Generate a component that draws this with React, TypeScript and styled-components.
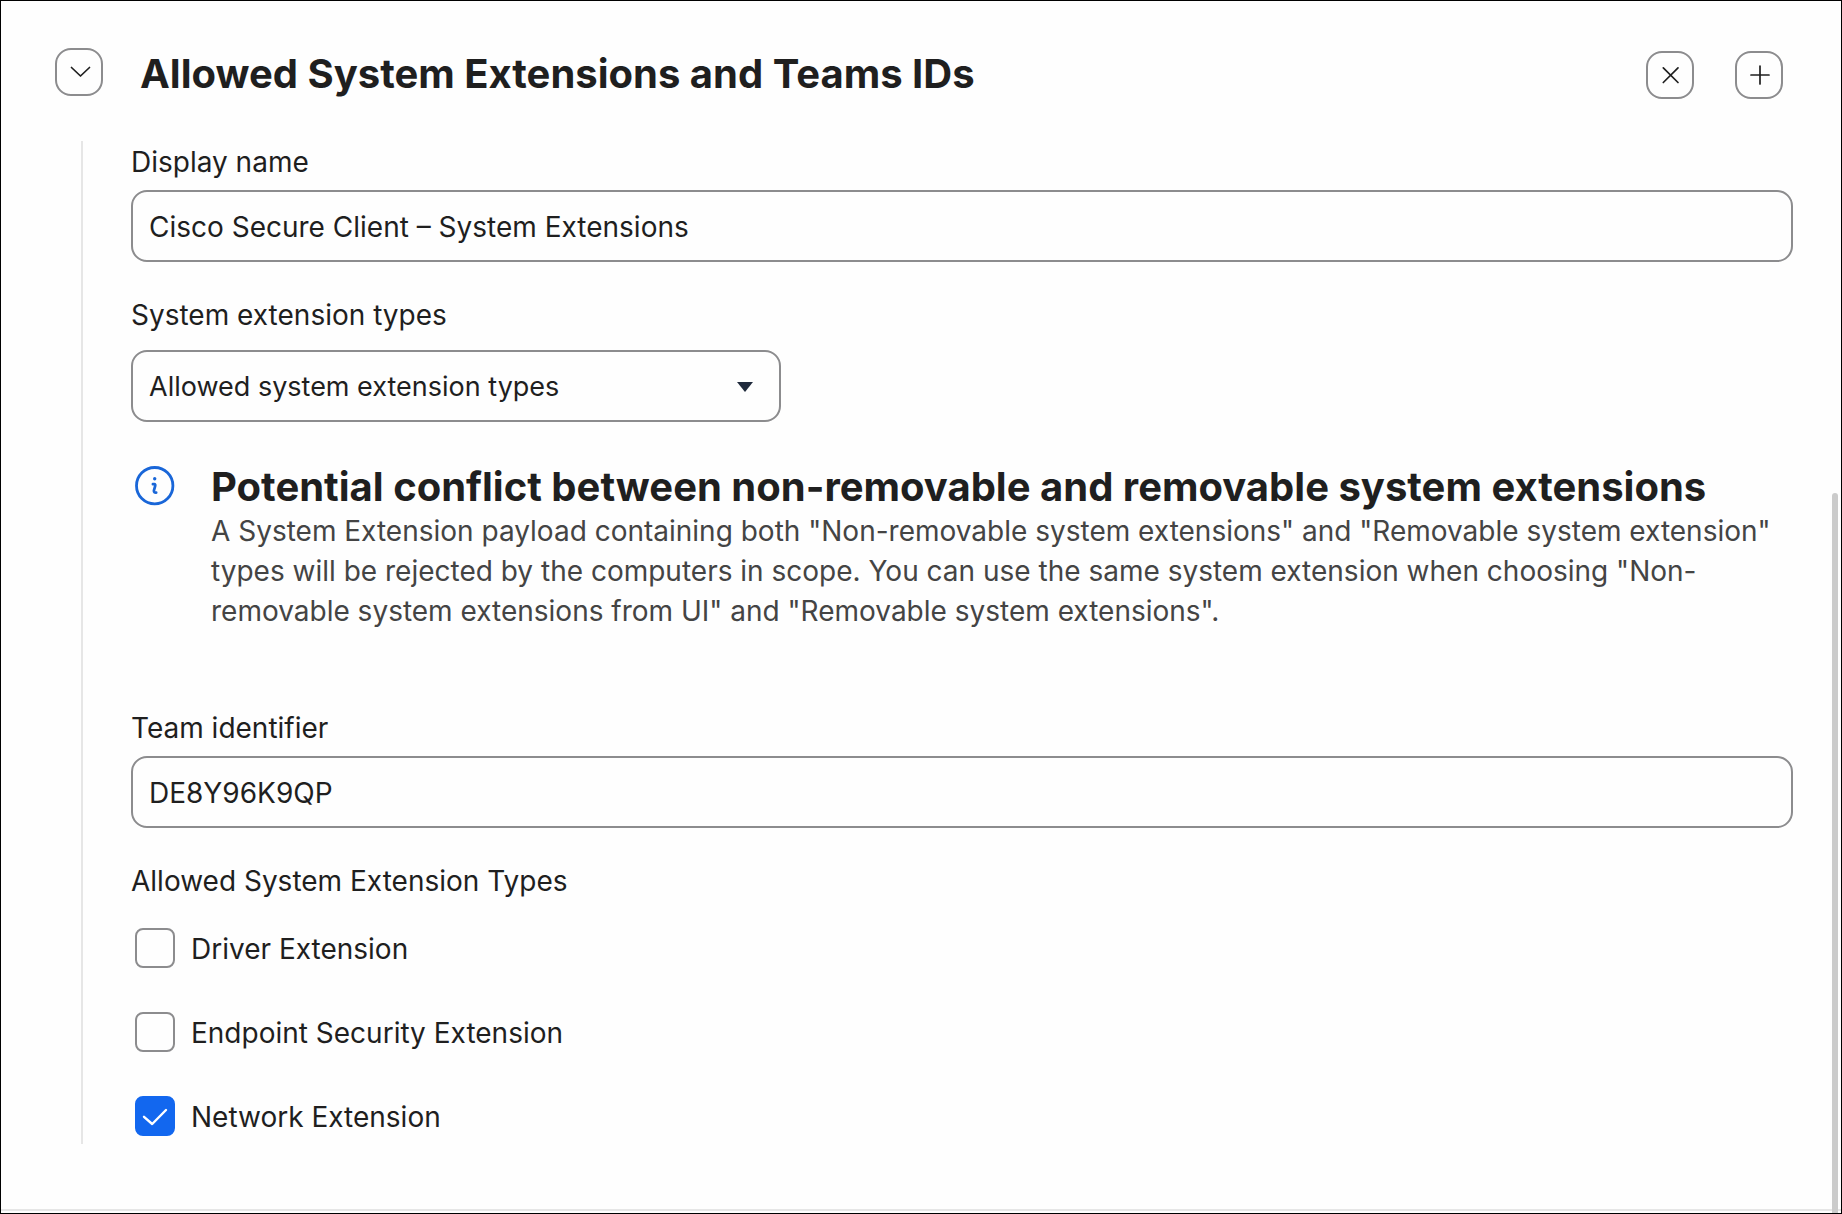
import React, { useState } from "react";
import styled, { createGlobalStyle } from "styled-components";

const ink = "#1f1f1f";
const outline = "#8c8c8e";
const hairline = "#e6e6e6";
const accent = "#1267ef";

const GlobalStyle = createGlobalStyle`
  *, *::before, *::after { box-sizing: border-box; }
  body {
    margin: 0;
    background: #fff;
    color: ${ink};
    font-family: Inter, "Liberation Sans", sans-serif;
    font-size: 28px;
    line-height: 40px;
  }
`;

const Page = styled.main`
  position: relative;
  display: flex;
  flex-direction: column;
  min-height: 100vh;
  padding-bottom: 2px;
  border: 1px solid #000;
  background: #fefefe;
`;

const Panel = styled.section`
  display: flex;
  flex-direction: column;
  gap: 42px;
  padding: 47px 48px 64px 54px;
`;

const Header = styled.header`
  display: flex;
  align-items: center;
  gap: 37px;
`;

const Title = styled.h1`
  flex: 1;
  margin: 0;
  font-size: 40px;
  line-height: 48px;
  font-weight: 700;
`;

const Actions = styled.div`
  display: flex;
  gap: 41px;
  padding: 3px 10px 0 0;
`;

const IconButton = styled.button<{ $top?: boolean }>`
  display: grid;
  place-items: center;
  align-self: ${(p) => (p.$top ? "flex-start" : "auto")};
  width: 48px;
  height: 48px;
  padding: 0;
  border: 2px solid ${outline};
  border-radius: 16px;
  background: transparent;
  color: ${ink};
  cursor: pointer;
`;

const Body = styled.div`
  display: flex;
  flex-direction: column;
  margin-left: 26px;
  padding-left: 48px;
  padding-bottom: 7px;
  border-left: 2px solid ${hairline};
`;

const Field = styled.div<{ $gap?: number }>`
  display: flex;
  flex-direction: column;
  gap: ${(p) => p.$gap ?? 8}px;
  margin-bottom: 32px;
`;

const Label = styled.label`
  padding-top: 1px;
`;

const TextInput = styled.input`
  width: 100%;
  height: 72px;
  padding: 2px 16px 0;
  border: 2px solid ${outline};
  border-radius: 16px;
  background: transparent;
  color: inherit;
  font: inherit;
`;

const SelectWrap = styled.div`
  position: relative;
  width: 100%;
  max-width: 650px;
`;

const Select = styled.select`
  appearance: none;
  display: block;
  width: 100%;
  height: 72px;
  padding: 2px 64px 0 16px;
  border: 2px solid ${outline};
  border-radius: 16px;
  background: transparent;
  color: inherit;
  font: inherit;
  font-size: 27px;
`;

const Caret = styled.svg`
  position: absolute;
  top: 32px;
  right: 28px;
  color: #1f2a3c;
  pointer-events: none;
`;

const Notice = styled.aside`
  display: flex;
  gap: 36px;
  margin: 9px 16px 76px 4px;
`;

const NoticeIcon = styled.svg`
  flex: none;
  margin-top: 3px;
  color: #1966d8;
`;

const NoticeTitle = styled.h2`
  margin: 0;
  font-size: 40px;
  line-height: 48px;
  font-weight: 700;
`;

const NoticeText = styled.p`
  margin: 0;
  color: #444;
`;

const Options = styled.fieldset`
  display: flex;
  flex-direction: column;
  gap: 42px;
  margin: 0;
  padding: 0;
  border: 0;
`;

const Legend = styled.legend`
  margin-bottom: 26px;
  padding: 1px 0 0;
`;

const Option = styled.label`
  display: flex;
  align-items: center;
  gap: 16px;
  padding-left: 4px;
  cursor: pointer;
`;

const OptionText = styled.span`
  padding-top: 2px;
`;

const BoxWrap = styled.span`
  display: grid;
  width: 40px;
  height: 40px;

  > * { grid-area: 1 / 1; }
`;

const Box = styled.input`
  appearance: none;
  width: 40px;
  height: 40px;
  margin: 0;
  border: 2px solid ${outline};
  border-radius: 8px;
  background: transparent;

  &:checked {
    border-color: ${accent};
    background: ${accent};
  }
`;

const Tick = styled.svg`
  pointer-events: none;
`;

const FootRule = styled.hr`
  width: 100%;
  height: 2px;
  margin: auto 0 0;
  border: 0;
  background: ${hairline};
`;

const ScrollThumb = styled.div`
  position: absolute;
  top: 492px;
  right: 3px;
  bottom: 0;
  width: 6px;
  border-radius: 3px 3px 0 0;
  background: #cbcbcb;
`;

const extensionTypes = ["Driver Extension", "Endpoint Security Extension", "Network Extension"];

const Stroke = ({ d }: { d: string }) => (
  <svg width="24" height="24" viewBox="0 0 24 24" fill="none" stroke="currentColor" strokeWidth="1.7" strokeLinecap="round" strokeLinejoin="round" aria-hidden="true">
    <path d={d} />
  </svg>
);

export default function App() {
  const [name, setName] = useState("Cisco Secure Client – System Extensions");
  const [team, setTeam] = useState("DE8Y96K9QP");
  const [checked, setChecked] = useState<string[]>(["Network Extension"]);

  const toggle = (type: string) =>
    setChecked((now) => (now.includes(type) ? now.filter((t) => t !== type) : [...now, type]));

  return (
    <>
      <GlobalStyle />
      <Page>
        <Panel>
          <Header>
            <IconButton type="button" $top aria-label="Collapse">
              <Stroke d="M4.5 7.5 L13.5 16 L22.5 7.5" />
            </IconButton>
            <Title>Allowed System Extensions and Teams IDs</Title>
            <Actions>
              <IconButton type="button" aria-label="Remove">
                <Stroke d="M5.3 4.8 L20 19.5 M20 4.8 L5.3 19.5" />
              </IconButton>
              <IconButton type="button" aria-label="Add">
                <Stroke d="M13 3 V21 M4 12 H22" />
              </IconButton>
            </Actions>
          </Header>

          <Body>
            <Field>
              <Label htmlFor="display-name">Display name</Label>
              <TextInput id="display-name" value={name} onChange={(e) => setName(e.target.value)} />
            </Field>

            <Field $gap={15}>
              <Label htmlFor="extension-types">System extension types</Label>
              <SelectWrap>
                <Select id="extension-types">
                  <option>Allowed system extension types</option>
                </Select>
                <Caret width="16" height="10" viewBox="0 0 16 10" fill="currentColor" aria-hidden="true">
                  <path d="M0 0 H16 L8 10 Z" />
                </Caret>
              </SelectWrap>
            </Field>

            <Notice>
              <NoticeIcon width="40" height="40" viewBox="0 0 40 40" fill="none" stroke="currentColor" aria-hidden="true">
                <circle cx="19.7" cy="19.7" r="18.2" strokeWidth="2.8" />
                <circle cx="19.7" cy="12.7" r="1.7" fill="currentColor" stroke="none" />
                <path d="M17.9 18.2 H19.3 Q20.6 18.3 20.2 19.8 L18.9 24.6 Q18.7 26.8 21.2 26.6" strokeWidth="2.7" strokeLinecap="round" strokeLinejoin="round" />
              </NoticeIcon>
              <div>
                <NoticeTitle>Potential conflict between non-removable and removable system extensions</NoticeTitle>
                <NoticeText>
                  A System Extension payload containing both "Non-removable system extensions" and "Removable system
                  extension" types will be rejected by the computers in scope. You can use the same system extension
                  when choosing "Non-removable system extensions from UI" and "Removable system extensions".
                </NoticeText>
              </div>
            </Notice>

            <Field>
              <Label htmlFor="team-identifier">Team identifier</Label>
              <TextInput id="team-identifier" value={team} onChange={(e) => setTeam(e.target.value)} />
            </Field>

            <Options>
              <Legend>Allowed System Extension Types</Legend>
              {extensionTypes.map((type) => (
                <Option key={type}>
                  <BoxWrap>
                    <Box type="checkbox" checked={checked.includes(type)} onChange={() => toggle(type)} />
                    {checked.includes(type) && (
                      <Tick width="40" height="40" viewBox="0 0 40 40" fill="none" stroke="#fff" strokeWidth="2.4" strokeLinecap="round" strokeLinejoin="round" aria-hidden="true">
                        <path d="M9 20.8 L17.2 28 L31 14" />
                      </Tick>
                    )}
                  </BoxWrap>
                  <OptionText>{type}</OptionText>
                </Option>
              ))}
            </Options>
          </Body>
        </Panel>
        <FootRule />
        <ScrollThumb />
      </Page>
    </>
  );
}
